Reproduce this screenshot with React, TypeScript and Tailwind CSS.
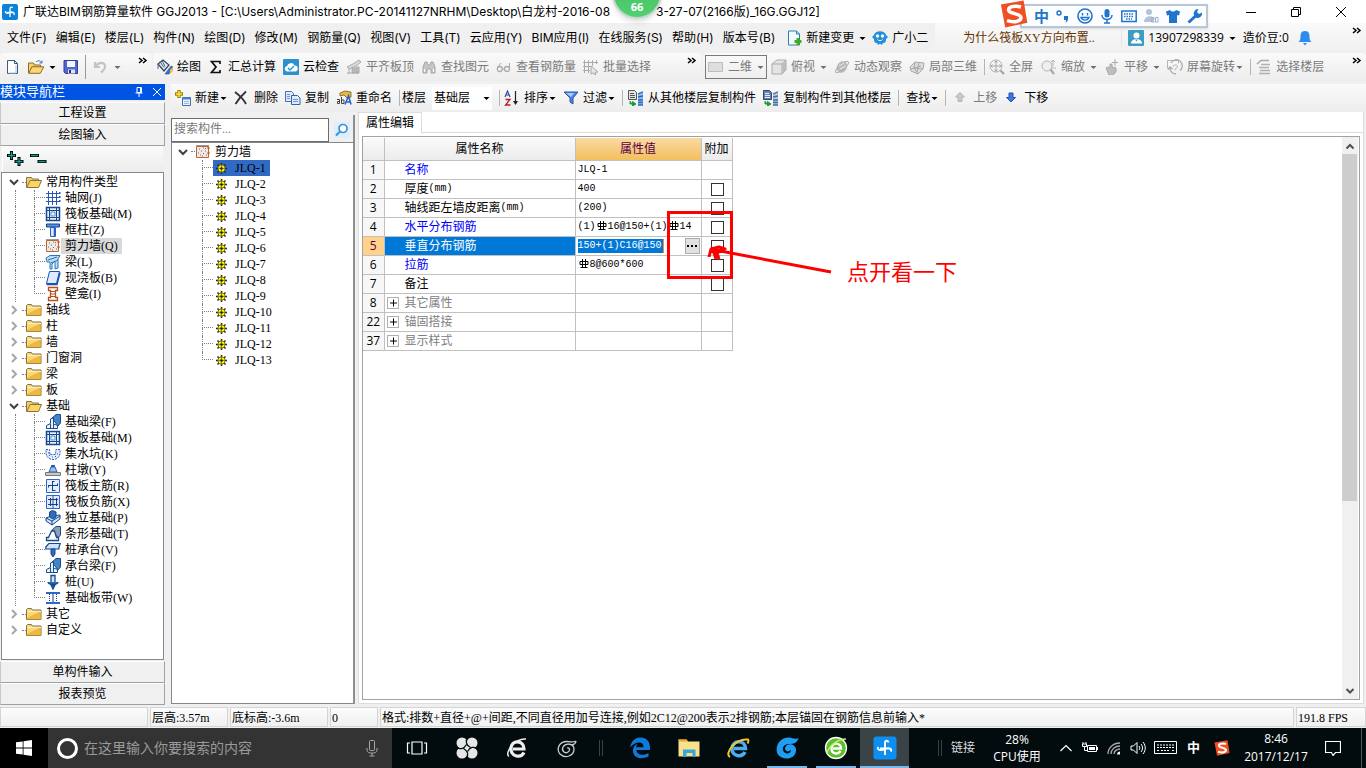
import type { ReactNode } from "react";

const UI = "font-['Open_Sans','Noto_Sans_CJK_SC',sans-serif]";
const MENU = "font-['Inter','Noto_Sans_CJK_SC',sans-serif]";
const SONG = "font-['Liberation_Serif','Noto_Sans_CJK_SC',serif]";

type IconProps = { children: ReactNode; size?: string };

function Svg({ children, size = "h-4 w-4" }: IconProps) {
  return (
    <svg viewBox="0 0 16 16" className={`${size} shrink-0`} fill="none" aria-hidden="true">
      {children}
    </svg>
  );
}

function Caret({ dim = false }: { dim?: boolean }) {
  return (
    <svg viewBox="0 0 8 16" className={`h-4 w-2 shrink-0 ${dim ? "text-[#6d6d6d]" : "text-black"}`} aria-hidden="true">
      <path d="M1.500 7h6l-3 3z" fill="currentColor" />
    </svg>
  );
}

function Sep() {
  return <span className="h-4 w-px shrink-0 bg-[#b4b4b4]" />;
}

function More() {
  return (
    <svg viewBox="0 0 10 8" className="mt-1 h-2 w-[10px] shrink-0 self-start" fill="none" stroke="#000" strokeWidth="1.500" aria-hidden="true">
      <path d="M1 1l3 2.500L1 6M5 1l3 2.500L5 6" />
    </svg>
  );
}

/* ---------- toolbar icons ---------- */

const newFile = (
  <Svg>
    <path d="M2.500 1.500h7l3 3v10h-10z" fill="#fff" stroke="#3d5a80" />
    <path d="M9.500 1.500v3h3" stroke="#3d5a80" />
    <path d="M11 6v8H4" stroke="#a9c4e6" />
  </Svg>
);
const openFile = (
  <Svg>
    <path d="M.5 14V4h5l1 2h6v3" fill="#f5cf72" stroke="#8f6a1e" />
    <path d="M.8 14.300l3-6.500h12l-3.500 6.500z" fill="#fbd776" stroke="#8f6a1e" />
    <path d="M8 3c2-2 4-1.500 5.500.5M14 1.500v2.500h-2.500" stroke="#3a6fb5" />
  </Svg>
);
const save = (
  <Svg>
    <path d="M1 1.500h13.500v13H2.500L1 13z" fill="#5468cc" stroke="#2f3e9e" />
    <path d="M4 2h8v6H4z" fill="#f2f5fd" />
    <path d="M5 10.500h7v4H5z" fill="#dde3f5" />
    <path d="M6 11h2v3H6z" fill="#27348b" />
  </Svg>
);
const undo = (
  <Svg>
    <path d="M2 3v5h5M2.500 7.500C5 3 11 2.500 12 6.500c.6 3-2 5.500-4 7" stroke="#c4c4c4" strokeWidth="2.200" />
  </Svg>
);
const paint = (
  <Svg>
    <path d="M1 5l5-4 6 5-5 6z" fill="#dfe7f3" stroke="#345" strokeWidth="1.200" />
    <path d="M3 2.500l4 6M5 1.500l3 6M1 5v5" stroke="#4b6488" />
    <path d="M8 15l6-8 2 1-4 7z" fill="#3f6fc4" stroke="#274b8f" strokeWidth=".6" />
    <path d="M13 11l3-3v4l-3 3z" fill="#f0c23e" />
  </Svg>
);
const sigma = (
  <Svg>
    <path d="M12 5V2.500H3.500L8 8l-4.500 5.500H12V11" stroke="#111" strokeWidth="1.700" />
  </Svg>
);
const cloud = (
  <Svg>
    <rect width="16" height="16" rx="1" fill="#2b90d0" />
    <path d="M4 12.500a2.800 2.800 0 010-5.500 4 4 0 017.500-.5A3 3 0 0112 12.500z" fill="#fff" />
    <path d="M5 9l2 2 4-4" stroke="#2b90d0" strokeWidth="1.300" />
  </Svg>
);
const slab = (
  <Svg>
    <path d="M1 8l6-3 6-4 2 2-5 4-7 3z" fill="#d9d9d9" stroke="#aaa" />
    <path d="M3 10v5M1 14h12M6 9h3v5H6zM10 8h3v6h-3z" fill="#bbb" stroke="#aaa" />
  </Svg>
);
const binoc = (
  <Svg>
    <path d="M2 14V8l2-5h2l1 3h2l1-3h2l2 5v6h-4v-4H6v4z" fill="#c6c6c6" stroke="#a6a6a6" />
    <path d="M3.500 10v3M12.500 10v3" stroke="#fff" />
  </Svg>
);
const glasses = (
  <Svg>
    <circle cx="3.800" cy="10" r="2.500" stroke="#aaa" strokeWidth="1.300" />
    <circle cx="11" cy="10" r="2.500" stroke="#aaa" strokeWidth="1.300" />
    <path d="M6 10h2.500M2 8l3-4M13.500 9V4" stroke="#aaa" />
  </Svg>
);
const batch = (
  <Svg>
    <path d="M1.500 1v13M5.500 1v13M9.500 1v6M13.500 1v4M0 3.500h15M0 7.500h8M0 11.500h7" stroke="#aaa" />
    <path d="M8 7l7 6-3 .3 1 2-1.500.5-1-2L8 15z" fill="#e8e8e8" stroke="#aaa" />
  </Svg>
);
const flat = (
  <Svg>
    <path d="M.5 3.500h14v9H.5z" fill="#dedede" stroke="#bdbdbd" />
  </Svg>
);
const cube = (
  <Svg>
    <path d="M1 5l5-4h9v10l-4 4H1z" fill="#e4e4e4" stroke="#aaa" />
    <path d="M1 5h10v10M11 5l4-4" stroke="#aaa" />
    <path d="M11.500 5.500L15 2v9l-3.500 3.500z" fill="#bcbcbc" />
  </Svg>
);
const orbit = (
  <Svg>
    <ellipse cx="8" cy="8" rx="5" ry="6" fill="#bbb" transform="rotate(30 8 8)" />
    <ellipse cx="8" cy="8" rx="8" ry="2.600" stroke="#aaa" transform="rotate(-40 8 8)" />
    <path d="M5 7l5-3M6 10l6-3" stroke="#eee" />
  </Svg>
);
const local3d = (
  <Svg>
    <path d="M1 8l5-5 9 1-1 6-5 5-7-3z" fill="#ddd" stroke="#a8a8a8" />
    <path d="M6 3l-1 6 4 6M5 9l9 1M10 3.500L8 13M2 10l10-3" stroke="#a8a8a8" />
  </Svg>
);
const fullView = (
  <Svg>
    <circle cx="7" cy="7" r="6" stroke="#aaa" />
    <path d="M7 2v10M2 7h10M5.500 3.500L7 2l1.500 1.500M5.500 10.500L7 12l1.500-1.500M3.500 5.500L2 7l1.500 1.500M10.500 5.500L12 7l-1.500 1.500" stroke="#a4a4a4" />
    <path d="M11.500 11.500L15 15" stroke="#a4a4a4" strokeWidth="2.200" />
  </Svg>
);
const zoomIcon = (
  <Svg>
    <circle cx="6" cy="7" r="5" fill="#efefef" stroke="#b5b5b5" />
    <path d="M9.500 10.500L13 15" stroke="#aaa" strokeWidth="2.200" />
    <path d="M12 1v6M10 3l2-2 2 2M10 9h5" stroke="#b5b5b5" />
  </Svg>
);
const pan = (
  <Svg>
    <path d="M2 9l2-1 2 1V5h2v3l4 1v4l-3 3H5z" fill="#bdbdbd" stroke="#aaa" />
    <path d="M11 0v7M8 3.500h6" stroke="#aaa" />
  </Svg>
);
const rotate = (
  <Svg>
    <path d="M.5 1.500h11v3M.5 1.500v8" stroke="#b5b5b5" />
    <path d="M4 4a6 6 0 119 7.500M3 8a6 6 0 006 7M1 10.500L3 8l2.500 2" stroke="#aaa" strokeWidth="1.300" />
    <path d="M6 7.500c.5-2 4.500-2 4.500 0 0 1.500-2.500 1.500-2.500 3.500" stroke="#aaa" />
  </Svg>
);
const floors = (
  <Svg>
    <path d="M1 5l4-3.500h8" stroke="#a8a8a8" strokeWidth="1.500" />
    <path d="M5 5.500h9M3 8.500h10M4 11.500h10M3 14.500h11" stroke="#b0b0b0" strokeWidth="1.500" />
  </Svg>
);
const addNew = (
  <Svg>
    <path d="M4 0v8M0 4h8" stroke="#9a8600" strokeWidth="3.400" />
    <path d="M4 1v6M1 4h6" stroke="#ffe13a" strokeWidth="1.600" />
    <path d="M7.500 7.500h8v8h-8z" fill="#eef4ff" stroke="#4a6ea8" />
    <path d="M7.500 8.500h8" stroke="#4a7fd0" strokeWidth="2" />
    <path d="M9 11.500h5M9 13.500h5" stroke="#9db6dc" />
  </Svg>
);
const del = (
  <Svg>
    <path d="M1 2c4 3 9 8 11 12M12 1.500C8 5 4 10 1.500 14" stroke="#333" strokeWidth="1.900" />
  </Svg>
);
const copy = (
  <Svg>
    <path d="M.5 1.500h6l2 2v8h-8z" fill="#dfeafc" stroke="#4a6fae" />
    <path d="M6.500 5.500h6l2.500 2.500v6.500H6.500z" fill="#dfeafc" stroke="#3660a8" />
    <path d="M2 4.500h3M2 6.500h3M2 8.500h3M8 9.500h5M8 11.500h5" stroke="#6b93d6" />
  </Svg>
);
const rename = (
  <Svg>
    <path d="M4 3l5-2 6 1v5l-4 1-3-3-4 1z" fill="#e6b84a" stroke="#7d5b13" strokeWidth=".8" />
    <path d="M1 9.500h2.500v4H1.500V11.500h2M5.500 7v6.500h2.500v-3.500h-2" stroke="#444" />
    <path d="M9 14.500L12.500 6l2.500 8.500M10 12h4" stroke="#2f62c9" strokeWidth="1.600" />
  </Svg>
);
const sort = (
  <Svg>
    <path d="M1 7l2.500-6L6 7M2 5h3" stroke="#2a4f9c" strokeWidth="1.200" />
    <path d="M1.500 9.500H6L1.500 15H6.500" stroke="#b0202c" strokeWidth="1.300" />
    <path d="M11.500 1v12" stroke="#222" strokeWidth="1.200" />
    <path d="M9 11h5l-2.500 4z" fill="#222" />
  </Svg>
);
const filter = (
  <Svg>
    <path d="M1 2h14L10 8v6l-3-2V8z" fill="#4a86e0" stroke="#2a55a8" />
    <path d="M3 3h8L8 7z" fill="#a9cbf8" />
  </Svg>
);
const copyFrom = (
  <Svg>
    <path d="M.5.5h6l2 2v7h-8z" fill="#e2e2e2" stroke="#555" />
    <path d="M2 3.500h4M2 5.500h5M2 7.500h5" stroke="#555" />
    <path d="M2 11v3h3M4.500 11.500L8 14l-3.500 2z" fill="#1c9a3c" stroke="#1c9a3c" />
    <path d="M10 3l5-2v14h-5z" fill="#8fb9ec" />
    <path d="M10 4l5-2M10 7l5-1M10 10h5M10 12.500h5M10 15h5" stroke="#2b69bd" strokeWidth="1.300" />
  </Svg>
);
const copyTo = (
  <Svg>
    <path d="M.5.5h6l2 2v7h-8z" fill="#5c83c4" stroke="#444" />
    <path d="M2 3.500h4M2 5.500h5M2 7.500h5" stroke="#e9eefa" />
    <path d="M2 11v3h3M4.500 11.500L8 14l-3.500 2z" fill="#1c9a3c" stroke="#1c9a3c" />
    <path d="M10 3l5-2v14h-5z" fill="#b7c6d8" />
    <path d="M10 4l5-2M10 7l5-1M10 10h5M10 12.500h5M10 15h5" stroke="#3d6ea8" strokeWidth="1.300" />
  </Svg>
);
const up = (
  <Svg>
    <path d="M7 2.500l4.500 4.500H9v4.500H5V7H2.500z" fill="#c9c9c9" stroke="#b4b4b4" />
  </Svg>
);
const down = (
  <Svg>
    <path d="M7 12l4.500-4.500H9V3H5v4.500H2.500z" fill="#3f76e8" stroke="#2450b0" />
  </Svg>
);

/* ---------- tree icons ---------- */

const folder = (
  <Svg>
    <path d="M.5 13.500v-10l1-1h4l1 1.500h8.500v9.500z" fill="#f7d778" stroke="#8a7442" />
    <path d="M1 12L15 5v8.500H1z" fill="#e9ab2c" opacity=".7" />
    <path d="M1 5.500h14" stroke="#fff0b8" />
  </Svg>
);
const folderOpen = (
  <Svg>
    <path d="M.5 13.500v-10h5l1 1.500h6v3" fill="#f3cf6d" stroke="#8a7442" />
    <path d="M.8 13.500L4 6.500h11.500l-3 7z" fill="#fbd462" stroke="#8a7442" />
  </Svg>
);
const wall = (
  <Svg>
    <path d="M1.500 2.500h12v11h-12z" fill="#f3e9e4" stroke="#b5673a" />
    <path d="M1 1.500h13" stroke="#9a9a9a" />
    <path d="M4 5h1M8 4h1M6 7h1M10 7h1M3 9h1M8 9.500h1M5 11h1M11 11h1M10 4.500h1M7 12h1" stroke="#6b6b6b" />
    <path d="M13.500 3v2M13.500 8v2" stroke="#d6551a" strokeWidth="2" />
  </Svg>
);
const grid = (
  <Svg>
    <path d="M3.500 1v14M7.500 1v14M11.500 1v14M1 3.500h14M1 7.500h14M1 11.500h14" stroke="#2b56ae" />
    <path d="M14 3h1.500M14 7h1.500M14 11h1.500" stroke="#2b56ae" strokeWidth="2" />
  </Svg>
);
const raft = (
  <Svg>
    <path d="M1.500 1.500h13v13h-13z" fill="#e8f2ff" stroke="#14498f" strokeWidth="1.500" />
    <path d="M4.500 2v12M11.500 2v12M2 4.500h12M2 11.500h12" stroke="#14498f" />
    <path d="M6 6h4v4H6z" stroke="#5a8fd0" />
  </Svg>
);
const column = (
  <Svg>
    <path d="M1.500 2h13v3h-13z" fill="#5c93e0" stroke="#123f8c" />
    <path d="M5.500 5.500h5v9h-5z" fill="#dce9fc" stroke="#2a5fc0" />
    <path d="M9.500 6v8" stroke="#2a5fc0" strokeWidth="1.500" />
  </Svg>
);
const beam = (
  <Svg>
    <path d="M1 4l4-2.500h10L13 5v9l-3 1V7L7 10v5H5V8L2 8z" fill="#bcdcf4" stroke="#2a76b8" />
    <path d="M3 6l9-3M6 9l7-3" stroke="#2a76b8" />
  </Svg>
);
const cast = (
  <Svg>
    <path d="M4.500 1.500h10l-3 12h-10z" fill="#dcebff" stroke="#1e50b5" />
    <path d="M1.500 14.500h10.500l3-12" stroke="#1e50b5" strokeWidth="1.500" />
  </Svg>
);
const niche = (
  <Svg>
    <path d="M3.500 1.500h9v3h-2v7h2v3h-9v-3h2v-7h-2z" fill="#fff" stroke="#b3521b" strokeWidth="1.300" />
    <path d="M5 5.500h5.500M5 8h5.500M5 10.500h5.500" stroke="#b3521b" />
  </Svg>
);
const foundBeam = (
  <Svg>
    <path d="M7 4l4-3.500h4.500V9L13 12z" fill="#4384c9" stroke="#1a4c88" />
    <path d="M1.500 14.500v-3l4-2V5l3-1v6l4 1.500v3z" fill="#eaf4ff" stroke="#1a4c88" />
    <path d="M5.500 10v4.500M8.500 10v4.500" stroke="#1a4c88" />
  </Svg>
);
const sump = (
  <Svg>
    <path d="M1 3.500h3.500l.5 5h5.500l.5-5H15v3c0 5-4 7-7 7s-7-2-7-7z" fill="#e6efff" stroke="#2a5ab0" strokeDasharray="2 1" />
    <path d="M4 9.500h1M7 11h1M10 10.500h1M12 8h1M3 7h1" stroke="#2a5ab0" />
  </Svg>
);
const pier = (
  <Svg>
    <path d="M6 5h4l2 5H4z" fill="#9dbdf0" stroke="#2a5ab0" />
    <path d="M.5 10.500h15v3H.5z" fill="#c9c9c9" stroke="#777" />
    <path d="M6 4h4" stroke="#2a5ab0" strokeWidth="2" />
  </Svg>
);
const mainBar = (
  <Svg>
    <path d="M1.500 1.500h13v13h-13z" fill="#e4eeff" stroke="#2e66cc" />
    <path d="M7.500 3v10M7.500 12.500h3M7.500 3.500h2M3 7.500h10M3.500 7.500v2M12.500 7.500v-2" stroke="#123f8c" />
  </Svg>
);
const negBar = (
  <Svg>
    <path d="M1.500 1.500h13v13h-13z" fill="#dfe9fb" stroke="#2e66cc" />
    <path d="M8 2v12" stroke="#8c9fc4" strokeWidth="2" />
    <path d="M3 5.500h10M3 10.500h10M5.500 4v8M11.500 4v8" stroke="#123f8c" />
  </Svg>
);
const isolated = (
  <Svg>
    <path d="M1 8l5-2 9-1v4l-8 6-6-4z" fill="#cfe3fa" stroke="#14498f" />
    <path d="M4.500 2l3-1.500L11 2v5L8 9 4.500 7z" fill="#2f6db8" stroke="#14498f" />
    <path d="M1 8l6 3 8-5M7 11v4" stroke="#14498f" />
  </Svg>
);
const strip = (
  <Svg>
    <path d="M7 4l4-3.500h4.500V9L13 12z" fill="#8c9db5" stroke="#1a4c88" />
    <path d="M1.500 14.500v-3h2l3-6.500h3l2 6.500h2v3z" fill="#fff" stroke="#14498f" strokeWidth="1.300" />
  </Svg>
);
const pileCap = (
  <Svg>
    <path d="M.8 5l3-3.500h11.500L14 5v2H.8z" fill="#cfe3fa" stroke="#14498f" strokeWidth="1.200" />
    <path d="M6 7h4v5l-2 3-2-3z" fill="#2f6db8" stroke="#14498f" />
  </Svg>
);
const pile = (
  <Svg>
    <path d="M6 1.500h4v8H6z" fill="#cfe3fa" stroke="#14498f" strokeWidth="1.300" />
    <path d="M3 8c0 3 10 3 10 0M6 11h4l-2 4z" fill="#2f6db8" stroke="#14498f" strokeWidth="1.300" />
  </Svg>
);
const band = (
  <Svg>
    <path d="M1 3h14M1 13h14" stroke="#2e66cc" strokeWidth="2" />
    <path d="M4.500 4v8M11.500 4v8" stroke="#123f8c" strokeDasharray="1 1" />
    <path d="M8 4v8" stroke="#123f8c" />
  </Svg>
);
const gear = (
  <svg viewBox="0 0 11 11" className="h-[11px] w-[11px] shrink-0" fill="none" aria-hidden="true">
    <path d="M5.500 0v11M0 5.500h11M1.500 1.500l8 8M9.500 1.500l-8 8" stroke="#222" strokeWidth="1.500" />
    <circle cx="5.500" cy="5.500" r="3.700" fill="#f6ee10" stroke="#4d4600" strokeWidth=".7" />
    <path d="M5.500 2v7M2 5.500h7" stroke="#6b6400" strokeWidth=".7" />
    <circle cx="5.500" cy="5.500" r="1.300" fill="#222" />
  </svg>
);

const menus = [
  "文件(F)", "编辑(E)", "楼层(L)", "构件(N)", "绘图(D)", "修改(M)", "钢筋量(Q)", "视图(V)",
  "工具(T)", "云应用(Y)", "BIM应用(I)", "在线服务(S)", "帮助(H)", "版本号(B)",
];

type Leaf = { label: string; icon: ReactNode; active?: boolean };
type Group = { label: string; items?: Leaf[] };

const groups: Group[] = [
  {
    label: "常用构件类型",
    items: [
      { label: "轴网(J)", icon: grid },
      { label: "筏板基础(M)", icon: raft },
      { label: "框柱(Z)", icon: column },
      { label: "剪力墙(Q)", icon: wall, active: true },
      { label: "梁(L)", icon: beam },
      { label: "现浇板(B)", icon: cast },
      { label: "壁龛(I)", icon: niche },
    ],
  },
  { label: "轴线" },
  { label: "柱" },
  { label: "墙" },
  { label: "门窗洞" },
  { label: "梁" },
  { label: "板" },
  {
    label: "基础",
    items: [
      { label: "基础梁(F)", icon: foundBeam },
      { label: "筏板基础(M)", icon: raft },
      { label: "集水坑(K)", icon: sump },
      { label: "柱墩(Y)", icon: pier },
      { label: "筏板主筋(R)", icon: mainBar },
      { label: "筏板负筋(X)", icon: negBar },
      { label: "独立基础(P)", icon: isolated },
      { label: "条形基础(T)", icon: strip },
      { label: "桩承台(V)", icon: pileCap },
      { label: "承台梁(F)", icon: foundBeam },
      { label: "桩(U)", icon: pile },
      { label: "基础板带(W)", icon: band },
    ],
  },
  { label: "其它" },
  { label: "自定义" },
];

const walls = Array.from({ length: 13 }, (_, i) => `JLQ-${i + 1}`);

function Tool({ icon, label, dim, caret }: { icon?: ReactNode; label: string; dim?: boolean; caret?: boolean }) {
  return (
    <button className={`flex shrink-0 items-center whitespace-nowrap ${dim ? "text-[#7b7b7b]" : "text-black"}`}>
      {icon}
      <span className={icon ? "ml-1" : ""}>{label}</span>
      {caret && <Caret dim={dim} />}
    </button>
  );
}

function Twisty({ open }: { open?: boolean }) {
  return (
    <svg viewBox="0 0 12 16" className="h-4 w-3 shrink-0" fill="none" strokeWidth="2" aria-hidden="true">
      {open ? <path d="M2 6l4 4 4-4" stroke="#404040" /> : <path d="M4 4l4 4-4 4" stroke="#a6a6a6" />}
    </svg>
  );
}

function Elbow({ last }: { last: boolean }) {
  return (
    <span className="h-4 w-[11px] shrink-0">
      <span className="block h-2 border-b border-l border-dotted border-[#808080]" />
      {!last && <span className="block h-2 border-l border-dotted border-[#808080]" />}
    </span>
  );
}

function SideButton({ children }: { children: ReactNode }) {
  return (
    <button className="h-[22px] w-full border border-t-white border-r-[#a0a0a0] border-b-[#a0a0a0] border-l-[#c8c8c8] bg-[#f0f0f0] text-center text-xs leading-5">
      {children}
    </button>
  );
}

function Sidebar() {
  return (
    <aside className={`flex w-[165px] shrink-0 flex-col ${SONG} text-xs`}>
      <div className="flex h-4 items-center bg-[#0054e3] text-white">
        <span className="text-[13px] leading-4">模块导航栏</span>
        <button className="ml-auto" aria-label="固定">
          <svg viewBox="0 0 12 12" className="h-3 w-3" fill="none" stroke="#fff" aria-hidden="true">
            <path d="M4 1.500h4.500v5H4zM2.500 7h7M6 7v4M7.500 2v5" />
          </svg>
        </button>
        <button className="mr-[2px] ml-[6px]" aria-label="关闭">
          <svg viewBox="0 0 12 12" className="h-3 w-3" fill="none" stroke="#fff" aria-hidden="true">
            <path d="M2 2l8 8M10 2l-8 8" />
          </svg>
        </button>
      </div>
      <div className="pt-[2px]">
        <SideButton>工程设置</SideButton>
        <SideButton>绘图输入</SideButton>
      </div>
      <div className="mx-[2px] flex h-[26px] items-center border-l border-white bg-linear-to-b from-[#fbfbfb] to-[#ececec] pl-1">
        <button aria-label="全部展开">
          <svg viewBox="0 0 18 16" className="h-4 w-[18px]" fill="none" aria-hidden="true">
            <path d="M4.500 0v9M0 4.500h9M12 6v9M7.500 10.500h9" stroke="#000" strokeWidth="3" />
            <path d="M4.500 1v7M1 4.500h7M12 7v7M8.500 10.500h7" stroke="#159a8c" strokeWidth="1.300" />
          </svg>
        </button>
        <button className="ml-[5px]" aria-label="全部折叠">
          <svg viewBox="0 0 18 16" className="h-4 w-[18px]" fill="none" aria-hidden="true">
            <path d="M0 4.500h9M7.500 10.500h9" stroke="#000" strokeWidth="3" />
            <path d="M1 4.500h7M8.500 10.500h7" stroke="#159a8c" strokeWidth="1.300" />
          </svg>
        </button>
      </div>
      <ul className="mx-px flex-1 border border-[#828790] bg-white pt-px pl-px leading-4">
        {groups.map((group, g) => (
          <li key={g}>
            <div className="flex items-center whitespace-nowrap">
              <span className="w-[5px]" />
              <Twisty open={!!group.items} />
              <span className="ml-[2px] w-[4px] border-b border-dotted border-[#808080]" />
              {group.items ? folderOpen : folder}
              <span className="ml-1">{group.label}</span>
            </div>
            {group.items?.map((item, i) => (
              <div key={i} className="flex h-4 items-center whitespace-nowrap">
                <span className="ml-[12px] h-4 w-[19px] shrink-0 border-l border-dotted border-[#808080]" />
                <Elbow last={i === group.items!.length - 1} />
                {item.icon}
                <span className={item.active ? "bg-[#d9d9d9] px-1" : "px-1"}>{item.label}</span>
              </div>
            ))}
          </li>
        ))}
      </ul>
      <div className="pt-px pb-[2px]">
        <SideButton>单构件输入</SideButton>
        <SideButton>报表预览</SideButton>
      </div>
    </aside>
  );
}

function WallList() {
  return (
    <section className={`flex w-[184px] shrink-0 flex-col border-r-2 border-[#8f8f8f] ${SONG} text-xs`}>
      <div className="flex h-[27px] items-center pt-[2px]">
        <input
          aria-label="搜索构件"
          placeholder="搜索构件..."
          className="h-6 w-[158px] border border-[#6d6d6d] bg-white px-[2px] text-xs placeholder:text-[#7a7a7a]"
        />
        <button className="ml-[5px] bg-[#ddefff]" aria-label="搜索">
          <svg viewBox="0 0 16 16" className="h-4 w-4" fill="none" stroke="#3e93d6" aria-hidden="true">
            <circle cx="9" cy="6.500" r="4" strokeWidth="1.700" fill="#fff" />
            <path d="M6 9.500L2 13.500" strokeWidth="2.200" />
          </svg>
        </button>
      </div>
      <div className="flex-1 border border-r-0 border-[#828790] bg-white leading-4">
        <div className="flex h-[17px] items-end">
          <span className="w-[5px]" />
          <Twisty open />
          <span className="mb-2 ml-[2px] w-[4px] border-b border-dotted border-[#808080]" />
          {wall}
          <span className="ml-1">剪力墙</span>
        </div>
        <ul>
          {walls.map((name, i) => (
            <li key={name} className="flex h-4 items-center">
              <span className="w-[30px]" />
              <Elbow last={i === walls.length - 1} />
              <span className={`flex items-center pr-1 pl-[3px] ${i === 0 ? "bg-[#316ac5]" : ""}`}>
                {gear}
                <span className="ml-2">{name}</span>
              </span>
            </li>
          ))}
        </ul>
      </div>
    </section>
  );
}

/* HRB400 steel grade mark */
function Grade() {
  return (
    <svg viewBox="0 0 12 12" className="inline h-3 w-3 align-[-3px]" fill="none" stroke="#000" aria-label="C">
      <path d="M2 3.500h8v3H2zM4.500 1v8M7.500 1v8M2.500 9.500h7" />
    </svg>
  );
}

type Row = {
  no: number;
  name: string;
  unit?: string;
  link?: boolean;
  group?: boolean;
  value?: ReactNode;
  check?: boolean;
  current?: boolean;
};

const rows: Row[] = [
  { no: 1, name: "名称", link: true, value: "JLQ-1" },
  { no: 2, name: "厚度", unit: "(mm)", value: "400", check: true },
  { no: 3, name: "轴线距左墙皮距离", unit: "(mm)", value: "(200)", check: true },
  { no: 4, name: "水平分布钢筋", link: true, value: <>(1)<Grade />16@150+(1)<Grade />14</>, check: true },
  { no: 5, name: "垂直分布钢筋", link: true, check: true, current: true },
  { no: 6, name: "拉筋", link: true, value: <><Grade />8@600*600</>, check: true },
  { no: 7, name: "备注", check: true },
  { no: 8, name: "其它属性", group: true },
  { no: 22, name: "锚固搭接", group: true },
  { no: 37, name: "显示样式", group: true },
];

function nameColor(row: Row) {
  if (row.current) return "bg-[#0078d7] text-white";
  if (row.group) return "text-[#808080]";
  return row.link ? "text-[#0000ff]" : "text-black";
}

function PropertyTable() {
  return (
    <table className="w-[369px] table-fixed border-collapse text-xs leading-4">
      <colgroup>
        <col className="w-[21px]" />
        <col className="w-[191px]" />
        <col className="w-[126px]" />
        <col className="w-[31px]" />
      </colgroup>
      <thead>
        <tr className="h-[22px] bg-linear-to-b from-[#fafafa] to-[#ececec]">
          <th className="border-r border-b border-[#c0c0c0]" />
          <th className="border-r border-b border-[#c0c0c0] font-normal">属性名称</th>
          <th className="border-r border-b border-[#c0c0c0] bg-linear-to-b from-[#f9d9a2] to-[#f2bf5c] font-normal text-[#5a0046]">属性值</th>
          <th className="border-r border-b border-[#c0c0c0] font-normal whitespace-nowrap">附加</th>
        </tr>
      </thead>
      <tbody>
        {rows.map((row) => (
          <tr key={row.no} className="h-[19px]">
            <th
              className={`border-r border-b border-[#c0c0c0] text-center font-normal ${UI} ${
                row.current ? "bg-[#ffd28a] text-[#5a0046]" : "bg-[#f7f7f7]"
              }`}
            >
              {row.no}
            </th>
            <td className={`border-r border-b border-[#c0c0c0] p-0 pt-px whitespace-nowrap ${nameColor(row)}`}>
              <div className="flex items-center">
                <span className="w-5 shrink-0 pl-[2px]">
                  {row.group && (
                    <button className="block h-3 w-3 border border-[#b0b0b0] bg-white" aria-label={`展开${row.name}`}>
                      <svg viewBox="0 0 10 10" className="h-[10px] w-[10px]" stroke="#000" aria-hidden="true">
                        <path d="M2 5h7M5.500 1.500v7" />
                      </svg>
                    </button>
                  )}
                </span>
                {row.name}
                {row.unit && <span className="font-['Liberation_Mono',monospace] text-[10px]">{row.unit}</span>}
              </div>
            </td>
            <td className="border-r border-b border-[#c0c0c0] p-0 pt-px pl-[2px] font-['Liberation_Mono',monospace] text-[10px] whitespace-nowrap">
              {row.current ? (
                <div className="flex items-center">
                  <input
                    aria-label={row.name}
                    defaultValue="150+(1)C16@150"
                    className="h-[14px] w-[86px] border-r border-[#ff8728] bg-[#0078d7] text-white"
                  />
                  <button className="mr-px ml-auto flex h-4 w-[15px] items-center justify-center border border-[#adadad] bg-[#e1e1e1]" aria-label="编辑">
                    <svg viewBox="0 0 11 3" className="h-[3px] w-[11px]" aria-hidden="true">
                      <path d="M0 0h2v2H0zM4 0h2v2H4zM8 0h2v2H8z" />
                    </svg>
                  </button>
                </div>
              ) : (
                row.value
              )}
            </td>
            <td className="border-r border-b border-[#c0c0c0] p-0 pt-px pl-px">
              {row.check && (
                <input
                  type="checkbox"
                  aria-label={`附加${row.name}`}
                  className="mx-auto block h-[13px] w-[13px] appearance-none border border-[#333] bg-white"
                />
              )}
            </td>
          </tr>
        ))}
      </tbody>
    </table>
  );
}

function Annotation() {
  return (
    <div className="pointer-events-none absolute top-[74px] left-[304px] flex text-[#ff0000]">
      <span className="h-[68px] w-[66px] shrink-0 border-[3px] border-[#ff0000]" />
      <svg viewBox="0 0 128 40" className="mt-[30px] -ml-[28px] h-10 w-32 shrink-0" fill="none" stroke="#ff0000" strokeWidth="3" aria-hidden="true">
        <path d="M10 9L126 31" />
        <path d="M4 16L6 8l8-2 6 2-8 4 2 6M8 9l3 9M6 10l12-1" strokeLinejoin="round" />
      </svg>
      <span className={`mt-[46px] ml-[14px] text-[22px] leading-8 whitespace-nowrap ${SONG}`}>点开看一下</span>
    </div>
  );
}

function ScrollBar() {
  return (
    <div className="flex w-4 shrink-0 flex-col bg-[#f0f0f0]">
      <svg viewBox="0 0 16 17" className="h-[17px] w-4" fill="none" stroke="#505050" strokeWidth="2" aria-hidden="true">
        <path d="M4.500 11.500L8 8l3.500 3.500" />
      </svg>
      <span className="w-[15px] flex-[348] bg-[#cdcdcd]" />
      <span className="flex-[182]" />
      <svg viewBox="0 0 16 17" className="h-[17px] w-4" fill="none" stroke="#505050" strokeWidth="2" aria-hidden="true">
        <path d="M4.500 7L8 10.500 11.500 7" />
      </svg>
    </div>
  );
}

function Editor() {
  return (
    <section className={`ml-[3px] flex min-w-0 flex-1 flex-col ${SONG}`}>
      <div className="flex h-[21px]">
        <button className="h-[21px] w-[64px] border border-b-0 border-[#dcdcdc] bg-white text-center text-xs leading-5">属性编辑</button>
        <span className="mr-[2px] flex-1 border-r border-b border-[#dcdcdc] bg-white" />
      </div>
      <div className="mr-[2px] flex flex-1 border border-t-0 border-[#dcdcdc] bg-white p-[3px]">
        <div className="relative flex flex-1 border border-[#a0a0a8] pr-px">
          <div className="min-w-0 flex-1 pt-px">
            <PropertyTable />
          </div>
          <ScrollBar />
          <Annotation />
        </div>
      </div>
    </section>
  );
}

function SogouMark({ size }: { size: string }) {
  return (
    <Svg size={size}>
      <path d="M.5 2.500L13.500.3 15.600 13 3 15.700z" fill="#f04e23" />
      <path d="M12 4C8 2.800 4.500 4 5 6s7 1.600 7 4-4 3-8 1.800" stroke="#fff" strokeWidth="2" />
    </Svg>
  );
}

function ImeBar() {
  return (
    <div className="absolute top-0 left-[1000px] flex items-center">
      <span className="z-10">
        <SogouMark size="h-7 w-7" />
      </span>
      <div className="mt-[3px] -ml-2 flex h-6 items-center gap-[6px] border-2 border-[#b9c6d8] bg-[#fcfdff] pr-[3px] pl-3 text-[#1f74cc] shadow-sm">
        <span className="text-[15px] leading-5 font-bold">中</span>
        <Svg>
          <circle cx="4" cy="5" r="2" stroke="currentColor" strokeWidth="1.400" />
          <path d="M9 8h4v3c0 2-1 3-3 3.500 1-1 1.200-1.500 1-2.500H9z" fill="currentColor" />
        </Svg>
        <Svg>
          <circle cx="8" cy="8" r="7" stroke="currentColor" strokeWidth="1.600" />
          <path d="M5.500 5v2.500M10.500 5v2.500M4 9.500c1.500 3.500 6.500 3.500 8 0z" stroke="currentColor" strokeWidth="1.400" />
        </Svg>
        <Svg>
          <rect x="5.500" y="1" width="5" height="8.500" rx="2.500" fill="currentColor" />
          <path d="M3 7c0 6 10 6 10 0M8 11.500V15M5 15h6" stroke="currentColor" strokeWidth="1.500" />
        </Svg>
        <Svg>
          <rect x=".8" y="3" width="14.400" height="10.500" stroke="currentColor" strokeWidth="1.500" />
          <path d="M3 6h10M3 8.500h10M5 11h6" stroke="currentColor" strokeDasharray="1.500 1" strokeWidth="1.300" />
        </Svg>
        <Svg>
          <circle cx="6" cy="4" r="3" fill="#b5c3d6" />
          <path d="M1 14c0-7 10-7 10-3v3z" fill="#b5c3d6" />
          <path d="M8 9.500h3v2H8.500v2.500h3M12.500 9.500h2.500v4.500h-2.500z" stroke="#9fb0c8" />
        </Svg>
        <Svg>
          <path d="M1 3.500L5 2c1.500 2 4.500 2 6 0l4 1.500-1 4-2-.5v8H4V7l-2 .5z" fill="currentColor" />
        </Svg>
        <Svg>
          <path d="M1.500 14.500L9 7.500" stroke="currentColor" strokeWidth="3" />
          <path d="M7.500 8a4.500 4.500 0 014-7l-1.500 3 2 2 3-1.500a4.500 4.500 0 01-6.500 5z" fill="currentColor" />
        </Svg>
      </div>
    </div>
  );
}

function TitleBar() {
  return (
    <header className="relative flex h-[23px] shrink-0 items-center bg-white pl-[2px]">
      <svg viewBox="0 0 16 16" className="h-4 w-4 shrink-0" fill="none" aria-hidden="true">
        <rect width="16" height="16" rx="2" fill="#0b83d9" />
        <path d="M8 13V4.500C8 3 10 2.500 10.500 4M3.500 7c-.5 3 2.500 2.500 4.500 1.500S13 8 12 11M5 8.500h6" stroke="#fff" strokeWidth="1.300" />
      </svg>
      <h1 className={`ml-[5px] flex text-xs whitespace-nowrap ${MENU}`}>
        <span className="w-[633px]">
          广联达BIM钢筋算量软件 GGJ2013 - [C:\Users\Administrator.PC-20141127NRHM\Desktop\白龙村-2016-08
        </span>
        <span>3-27-07(2166版)_16G.GGJ12]</span>
      </h1>
      <span className="absolute -top-[31px] left-[612px] flex h-[50px] w-[50px] items-end justify-center rounded-full border-2 border-[#c9d6cc] bg-linear-to-b from-[#3fbf62] to-[#52cf70] pb-[2px] text-[11px] leading-4 font-bold text-white shadow-md">
        66
      </span>
      <ImeBar />
      <div className="mr-[19px] ml-auto flex items-center gap-[33px]">
        <button aria-label="最小化">
          <svg viewBox="0 0 12 12" className="h-3 w-3" stroke="#000" aria-hidden="true">
            <path d="M1 6.500h10" />
          </svg>
        </button>
        <button aria-label="还原">
          <svg viewBox="0 0 12 12" className="h-3 w-3" stroke="#000" fill="none" aria-hidden="true">
            <path d="M1.500 3.500h7v7h-7zM3.500 3.500v-2h7v7h-2" />
          </svg>
        </button>
        <button aria-label="关闭窗口">
          <svg viewBox="0 0 12 12" className="h-3 w-3" stroke="#000" aria-hidden="true">
            <path d="M1 1l10 10M11 1L1 11" />
          </svg>
        </button>
      </div>
    </header>
  );
}

function MenuBar() {
  return (
    <nav className="flex h-[30px] shrink-0 items-center pl-[7px] whitespace-nowrap">
      <div className={`flex gap-[9px] ${MENU}`}>
        {menus.map((m) => (
          <button key={m}>{m}</button>
        ))}
      </div>
      <button className="ml-3 flex items-center">
        <Svg>
          <path d="M1.500 1h8l3 3v11h-11z" fill="#f2f9ff" stroke="#2a7fb8" />
          <path d="M9.500 1v3h3" stroke="#2a7fb8" />
          <path d="M11 8v7M7.500 11.500h7" stroke="#3fae1f" strokeWidth="3" />
        </Svg>
        <span className="ml-[3px]">新建变更</span>
        <span className="w-1" />
        <Caret />
      </button>
      <button className="ml-[6px] flex items-center">
        <Svg>
          <path d="M2 5c1-5 11-5 12 0l2 2-2 2c0 3-1 4-3 4l-1 2-2-1.500L6 15l-1-2c-2 0-3-1-3-4L0 7z" fill="#1e8fdc" />
          <circle cx="5.500" cy="6" r="1.700" fill="#fff" />
          <circle cx="10.500" cy="6" r="1.700" fill="#fff" />
          <path d="M5.500 9.500c1 1.500 4 1.500 5 0" stroke="#fff" />
        </Svg>
        <span className="ml-1">广小二</span>
      </button>
      <div className="ml-[7px] flex h-[30px] flex-1 items-center bg-linear-to-b from-[#fafafa] to-[#efefef]">
        <a href="#tips" className={`w-[187px] border-r border-[#e4e4e4] pl-7 ${SONG} text-[#663300]`}>
          为什么筏板XY方向布置..
        </a>
        <button className="ml-[6px] flex items-center">
          <Svg>
            <rect width="16" height="16" rx="1" fill="#3d9cc4" />
            <circle cx="8.500" cy="5.500" r="3" fill="#fff" />
            <path d="M3 13.500c0-6 11-6 11 0z" fill="#fff" />
            <path d="M7 9.500l1.500 2 1.500-2" fill="#3d9cc4" />
          </Svg>
          <span className="ml-1">13907298339</span>
          <span className="w-1" />
          <Caret />
        </button>
        <span className="ml-[7px]">造价豆:0</span>
        <button className="ml-2" aria-label="通知">
          <Svg>
            <path d="M8 1c4 0 4.500 3 4.500 6 0 3 1 4 2 5h-13c1-1 2-2 2-5C3.500 4 4 1 8 1z" fill="#2d8cf0" />
            <path d="M6 13h4l-2 2.500z" fill="#2d8cf0" />
          </Svg>
        </button>
        <span className="flex-1" />
        <More />
        <span className="w-1" />
      </div>
    </nav>
  );
}

function MainToolbar() {
  const group = "flex h-[28px] items-center rounded-sm bg-linear-to-b from-[#fafafa] to-[#ededed]";
  return (
    <div className="flex h-[31px] shrink-0">
      <div className={`${group} w-[152px] pl-[5px]`}>
        <button aria-label="新建文件">{newFile}</button>
        <button className="ml-[7px] flex items-center" aria-label="打开">
          {openFile}
          <span className="w-1" />
          <Caret />
        </button>
        <button className="ml-[7px]" aria-label="保存">{save}</button>
        <span className="ml-[6px] h-6 w-px bg-[#9a9a9a]" />
        <button className="ml-[7px] flex items-center" aria-label="撤销">
          {undo}
          <span className="w-1" />
          <Caret dim />
        </button>
        <span className="flex-1" />
        <More />
        <span className="w-1" />
      </div>
      <div className={`${group} ml-px w-[548px] gap-[7px] px-1`}>
        <Tool icon={paint} label="绘图" />
        <Tool icon={sigma} label="汇总计算" />
        <Tool icon={cloud} label="云检查" />
        <Tool icon={slab} label="平齐板顶" dim />
        <Tool icon={binoc} label="查找图元" dim />
        <Tool icon={glasses} label="查看钢筋量" dim />
        <Tool icon={batch} label="批量选择" dim />
        <span className="flex-1" />
        <More />
      </div>
      <div className={`${group} ml-[2px] flex-1 pl-[2px]`}>
        <div className="flex h-6 items-center border border-[#7a7a7a] px-[2px]">
          <Tool icon={flat} label="二维" dim />
          <span className="w-1" />
          <Caret dim />
        </div>
        <span className="w-1" />
        <Tool icon={cube} label="俯视" dim />
        <span className="w-1" />
        <Caret dim />
        <span className="w-[7px]" />
        <div className="flex items-center gap-[7px]">
          <Tool icon={orbit} label="动态观察" dim />
          <Tool icon={local3d} label="局部三维" dim />
        </div>
        <span className="w-[7px]" />
        <Sep />
        <span className="w-1" />
        <Tool icon={fullView} label="全屏" dim />
        <span className="w-2" />
        <Tool icon={zoomIcon} label="缩放" dim />
        <span className="w-1" />
        <Caret dim />
        <span className="w-[7px]" />
        <Tool icon={pan} label="平移" dim />
        <span className="w-1" />
        <Caret dim />
        <span className="w-[7px]" />
        <Tool icon={rotate} label="屏幕旋转" dim caret />
        <span className="w-[7px]" />
        <Sep />
        <span className="w-[5px]" />
        <Tool icon={floors} label="选择楼层" dim />
        <span className="flex-1" />
        <More />
        <span className="w-1" />
      </div>
    </div>
  );
}

function ComponentToolbar() {
  return (
    <div className="flex h-7 shrink-0 items-center gap-[7px] bg-linear-to-b from-[#fafafa] to-[#ededed] pl-1">
      <Tool icon={addNew} label="新建" caret />
      <Tool icon={del} label="删除" />
      <Tool icon={copy} label="复制" />
      <Tool icon={rename} label="重命名" />
      <div className="flex items-center">
        <Sep />
        <label htmlFor="floor" className="ml-[2px] whitespace-nowrap">楼层</label>
        <div className="ml-[6px] flex h-[23px] w-[60px] items-center bg-white">
          <select id="floor" className="w-[50px] appearance-none pl-[2px]" defaultValue="base">
            <option value="base">基础层</option>
          </select>
          <Caret />
        </div>
      </div>
      <div className="flex items-center gap-1">
        <Sep />
        <Tool icon={sort} label="排序" caret />
      </div>
      <Tool icon={filter} label="过滤" caret />
      <div className="flex items-center gap-[5px]">
        <Sep />
        <Tool icon={copyFrom} label="从其他楼层复制构件" />
      </div>
      <Tool icon={copyTo} label="复制构件到其他楼层" />
      <Sep />
      <Tool label="查找" caret />
      <Sep />
      <Tool icon={up} label="上移" dim />
      <Tool icon={down} label="下移" />
    </div>
  );
}

function StatusBar() {
  const cell = "h-5 border border-[#d4d4d4] bg-linear-to-b from-[#fcfcfc] to-[#f0f0f0] pl-px whitespace-nowrap leading-5";
  return (
    <footer className={`flex h-[21px] shrink-0 gap-[2px] ${SONG} text-xs`}>
      <span className={`${cell} w-[148px]`} />
      <span className={`${cell} w-[78px]`}>层高:3.57m</span>
      <span className={`${cell} w-[98px]`}>底标高:-3.6m</span>
      <span className={`${cell} w-12`}>0</span>
      <span className={`${cell} min-w-0 flex-1`}>格式:排数+直径+@+间距,不同直径用加号连接,例如2C12@200表示2排钢筋;本层锚固在钢筋信息前输入*</span>
      <span className={`${cell} w-[70px]`}>191.8 FPS</span>
    </footer>
  );
}

type AppIcon = { name: string; icon: ReactNode; on?: boolean; current?: boolean };

const pinned: AppIcon[] = [
  {
    name: "任务视图",
    icon: (
      <>
        <path d="M7 6h10v12H7z" stroke="#fff" strokeWidth="1.200" />
        <path d="M5 7H2.500v10H5M19 7h2.500v10H19" stroke="#fff" strokeWidth="1.200" />
      </>
    ),
  },
  {
    name: "搜狗",
    icon: (
      <>
        <circle cx="7" cy="7" r="5.500" fill="#e6e6e6" />
        <circle cx="17" cy="7" r="5.500" fill="#e6e6e6" />
        <circle cx="7" cy="17" r="5.500" fill="#e6e6e6" />
        <circle cx="17" cy="17" r="5.500" fill="#e6e6e6" />
        <path d="M8 8h8v8H8z" fill="#e6e6e6" />
        <path d="M13 1c-3 4-2 8 2.500 10.500M23 13c-4-3-8-2-10.500 2.500M11 23c3-4 2-8-2.500-10.500M1 11c4 3 8 2 10.500-2.500" stroke="#020b0d" strokeWidth="1.300" />
      </>
    ),
  },
  {
    name: "浏览器",
    icon: (
      <>
        <path d="M19 16.500c-3 6-13 4.500-13-4 0-9 13-9 13 .5H8" stroke="#eee" strokeWidth="3.200" />
        <path d="M4 20.500C-1 17 10 2 21 3" stroke="#eee" strokeWidth="1.500" />
      </>
    ),
  },
  {
    name: "广联达云",
    icon: (
      <path d="M21 5c-3 2-5 .5-9 .5C4 5.500 1 13 5 18c5 5 14 2 14-5 0-5-8-7-11-2-2 4 2 7 5 5s1-5-1-4M21 5c0 3-3 4-6 3.500" stroke="#ccc" strokeWidth="1.300" />
    ),
  },
];

const running: AppIcon[] = [
  {
    name: "Edge",
    icon: <path d="M20.500 20.500C12 24.500 4.500 21 5 14c.3-3.500 2.500-5.500 5-6.500C8.500 9 8.300 10 8.200 11.300h7.300C16 5.500 8 4.500 2 11.500 3.500 4 8 1.500 12.500 1.500 19 1.500 22 6 22 11v3H8.500c.2 5.500 7.500 6 12 3z" fill="#0f79d8" />,
  },
  {
    name: "文件资源管理器",
    icon: (
      <>
        <path d="M1.500 3.500h8L11 5.500h11.500v15h-21z" fill="#fbe08b" />
        <path d="M1.500 3.500h8L11 5.500H1.500z" fill="#e0a92c" />
        <path d="M6 21v-7.500h12.500V21h-3v-4h-6v4z" fill="#2fa8e0" />
      </>
    ),
  },
  {
    name: "Internet Explorer",
    icon: (
      <>
        <path d="M19 16c-3 6-13 4.500-13-3.500 0-9 13.500-9 13.500 0H8" stroke="#4aaef0" strokeWidth="3.500" />
        <path d="M4 21C-2 18 9 2 22 3.500c1 1 0 3-.5 4" stroke="#f5c52c" strokeWidth="2" />
      </>
    ),
  },
  {
    name: "广联达",
    on: true,
    icon: (
      <path d="M23.500 2c-3 2-6-.5-10-.5C4 1.500-1 12 3 18.500c5 7 19 5 18-5.500-1-6-10-6.500-11-1-.5 3.500 4 4.500 5.500 2C17 18 9 19 8 14c-1-4 3-6.500 7.500-6 4.500 0 7.500-3 8-6z" fill="#1e9df2" />
    ),
  },
  {
    name: "360浏览器",
    on: true,
    icon: (
      <>
        <circle cx="12" cy="12" r="10.500" fill="#5fbf2a" stroke="#fff" strokeWidth="1.300" />
        <path d="M16.500 15c-2.500 4-9 3-9-2.500 0-6.500 9.500-6.500 9.500 0H9" stroke="#fff" strokeWidth="2.400" />
        <path d="M3 18C4 10 14 3 22 3" stroke="#bdf07a" strokeWidth="1.500" />
      </>
    ),
  },
  {
    name: "GGJ2013",
    on: true,
    current: true,
    icon: (
      <>
        <rect x=".5" y=".5" width="23" height="23" rx="3" fill="#0e8ff0" />
        <path d="M12 19V7c0-3 3-3 3.500-.5M5 11c-1 4 4 3.500 7 2s7-1 6 2.500M7 12.500h10" stroke="#fff" strokeWidth="1.900" />
      </>
    ),
  },
];

function TaskButton({ app }: { app: AppIcon }) {
  return (
    <button aria-label={app.name} className={`flex h-10 w-[49px] flex-col items-center ${app.current ? "bg-[#3a4446]" : ""}`}>
      <svg viewBox="0 0 24 24" className="mt-2 h-6 w-6" fill="none" aria-hidden="true">
        {app.icon}
      </svg>
      {app.on && <span className={`mt-[6px] h-[2px] bg-[#76b9ed] ${app.current ? "w-full" : "w-10"}`} />}
    </button>
  );
}

function Taskbar() {
  return (
    <div className="flex h-10 shrink-0 items-center bg-[#020b0d] text-xs text-white">
      <button className="flex h-10 w-12 items-center justify-center bg-black" aria-label="开始">
        <Svg>
          <path d="M0 2.300L6.700 1.400v6.200H0zM7.500 1.300L16 0v7.600H7.500zM0 8.400h6.700v6.200L0 13.700zM7.500 8.400H16V16l-8.500-1.300z" fill="#fff" />
        </Svg>
      </button>
      <div className="flex h-10 w-[344px] items-center bg-[#333333] pl-[9px]">
        <span className="h-[21px] w-[21px] shrink-0 rounded-full border-[3px] border-white" />
        <input
          aria-label="搜索"
          placeholder="在这里输入你要搜索的内容"
          className="ml-[6px] min-w-0 flex-1 bg-transparent text-sm placeholder:text-[#9a9a9a]"
        />
        <svg viewBox="0 0 16 18" className="mr-3 h-[18px] w-4" fill="none" stroke="#a8a8a8" aria-hidden="true">
          <rect x="5.500" y="1.500" width="5" height="10" rx="1" />
          <path d="M3 9v2.500C3 15 13 15 13 11.500V9M8 14v3M5.500 17h5" />
        </svg>
      </div>
      <div className="flex gap-px">
        {pinned.map((app) => (
          <TaskButton key={app.name} app={app} />
        ))}
      </div>
      <span className="ml-2 h-4 w-1 border-x border-[#3b4244]" />
      <div className="ml-3 flex">
        {running.map((app) => (
          <TaskButton key={app.name} app={app} />
        ))}
      </div>
      <div className="ml-auto flex items-center">
        <span className="h-4 w-1 border-x border-[#3b4244]" />
        <span className="ml-[9px] text-[#ddd]">链接</span>
        <div className="ml-[17px] w-[50px] text-center leading-[17px] whitespace-nowrap">
          <div>28%</div>
          <div>CPU使用</div>
        </div>
        <div className="ml-4 flex items-center gap-2">
          <Svg>
            <path d="M2.500 11L8 5.500l5.500 5.500" stroke="#fff" strokeWidth="1.200" />
          </Svg>
          <Svg>
            <path d="M5.500 5.500h9v6h-9z" stroke="#fff" />
            <path d="M7 7h6v3H7zM15 7h1v3h-1z" fill="#fff" />
            <path d="M1 2v2M4 2v2M.5 4h4v2.500h-4zM2.500 6.500v4h3" stroke="#fff" />
          </Svg>
          <Svg>
            <path d="M2 14C2 8 7 3 14 3M5 14c0-4.500 4-8 9-8M8 14c0-3 3-5 6-5" stroke="#aaa" strokeWidth="1.300" />
            <path d="M11 14.500c0-2 1.500-3 3-3v3z" fill="#fff" />
          </Svg>
          <Svg>
            <path d="M1 6h2.500L7 2.500v11L3.500 10H1z" stroke="#fff" />
            <path d="M9 6c1 1.500 1 3 0 4M11 4c2 2.500 2 5.500 0 8M13 2c3 4 3 8 0 12" stroke="#fff" />
          </Svg>
        </div>
        <svg viewBox="0 0 24 14" className="ml-2 h-[14px] w-6" fill="none" stroke="#fff" aria-hidden="true">
          <path d="M.5.5h22v12H.5z" />
          <path d="M3 4h17M3 6.500h17M3 9.500h2M7 9.500h9M18 9.500h2" strokeDasharray="2 1" />
        </svg>
        <span className="ml-[9px] text-[13px] font-bold">中</span>
        <span className="ml-[14px]">
          <SogouMark size="h-4 w-4" />
        </span>
        <div className="ml-[10px] w-[72px] text-center leading-[18px] whitespace-nowrap">
          <div>8:46</div>
          <div>2017/12/17</div>
        </div>
        <button className="ml-[13px]" aria-label="操作中心">
          <Svg>
            <path d="M.5 1.500h15v11h-5L8 15.500l-1.500-3h-6z" stroke="#fff" strokeWidth="1.200" />
          </Svg>
        </button>
        <span className="mr-1 ml-5 h-10 w-px bg-[#555]" />
      </div>
    </div>
  );
}

export default function App() {
  return (
    <div className={`flex min-h-screen flex-col bg-[#f0f0f0] text-xs leading-4 text-black ${UI}`}>
      <TitleBar />
      <MenuBar />
      <MainToolbar />
      <main className="flex flex-1">
        <Sidebar />
        <div className="ml-[6px] flex min-w-0 flex-1 flex-col">
          <ComponentToolbar />
          <div className="flex flex-1 pb-[3px]">
            <div className="flex pt-[3px]">
              <WallList />
            </div>
            <Editor />
          </div>
        </div>
      </main>
      <StatusBar />
      <Taskbar />
    </div>
  );
}
